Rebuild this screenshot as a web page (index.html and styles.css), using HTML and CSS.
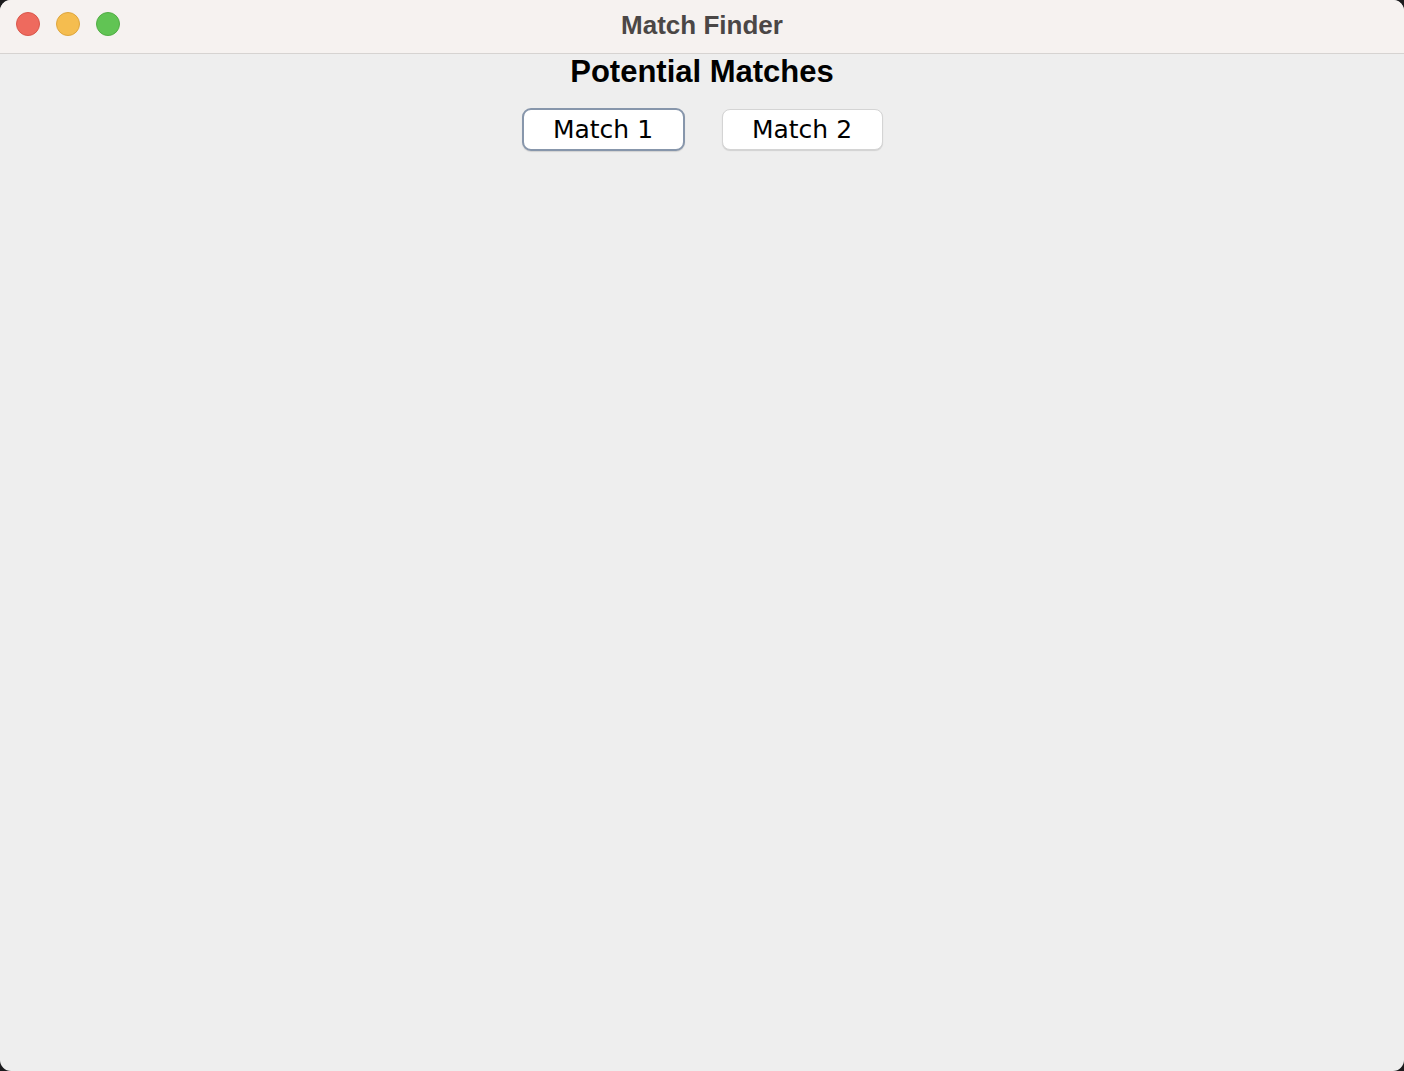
FILE: index.html
```html
<!DOCTYPE html>
<html>
<head>
<meta charset="utf-8">
<link rel="stylesheet" href="styles.css">
</head>
<body>
<div class="window">
  <div class="titlebar">
    <div class="lights">
      <span class="light red"></span>
      <span class="light yellow"></span>
      <span class="light green"></span>
    </div>
    <div class="title">Match Finder</div>
  </div>
  <div class="content">
    <h1 class="heading">Potential Matches</h1>
    <div class="buttons">
      <button class="btn focused">Match 1</button>
      <button class="btn">Match 2</button>
    </div>
  </div>
</div>
</body>
</html>
```

FILE: styles.css
```css
html, body {
  margin: 0;
  padding: 0;
  background: #1b1b1d;
  height: 100%;
}
.window {
  width: 1404px;
  height: 1071px;
  border-radius: 11px;
  overflow: hidden;
  background: #eeeeee;
  display: flex;
  flex-direction: column;
}
.titlebar {
  height: 53px;
  background: #f6f2f0;
  border-bottom: 1px solid #d6d3d1;
  position: relative;
  display: flex;
  align-items: center;
  justify-content: center;
  flex-shrink: 0;
}
.lights {
  position: absolute;
  left: 16px;
  top: 12px;
  display: flex;
  gap: 16px;
}
.light {
  width: 24px;
  height: 24px;
  border-radius: 50%;
  box-sizing: border-box;
}
.red { background: #ee6a5e; border: 1px solid #d9574b; }
.yellow { background: #f5bd4f; border: 1px solid #dea63e; }
.green { background: #61c454; border: 1px solid #52ad45; }
.title {
  font-family: "Liberation Sans", Arial, sans-serif;
  font-weight: bold;
  font-size: 26px;
  color: #4b4746;
  margin-top: -3px;
}
.content {
  flex: 1;
  display: flex;
  flex-direction: column;
  align-items: center;
}
.heading {
  margin: 0;
  font-family: "Liberation Sans", Arial, sans-serif;
  font-weight: bold;
  font-size: 31px;
  color: #000;
  line-height: 36px;
}
.buttons {
  display: flex;
  gap: 37px;
  margin-top: 19px;
}
.btn {
  font-family: "DejaVu Sans", sans-serif;
  font-size: 25px;
  color: #000;
  background: #ffffff;
  border: 1px solid #d4d4d4;
  border-radius: 8px;
  width: 161px;
  height: 41px;
  padding: 0;
  line-height: 38px;
  box-shadow: 0 1px 1px rgba(0,0,0,0.12);
}
.btn.focused {
  width: 163px;
  height: 43px;
  border: 2px solid #8796ab;
  border-radius: 9px;
  margin-top: -1px;
}
```
